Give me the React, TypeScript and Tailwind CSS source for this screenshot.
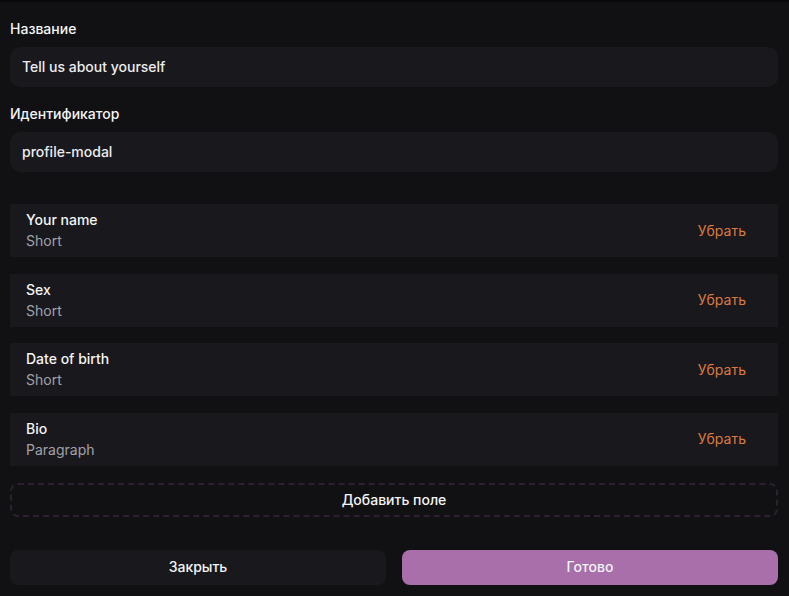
import React from "react";

const fields = [
  { name: "Your name", type: "Short" },
  { name: "Sex", type: "Short" },
  { name: "Date of birth", type: "Short" },
  { name: "Bio", type: "Paragraph" },
];

export default function App() {
  return (
    <div
      className="w-full h-[596px] bg-[#111113] border-t-2 border-[#08080a] text-[#f4f4f5] text-sm overflow-hidden"
      style={{ fontFamily: "Inter, 'Noto Sans', sans-serif" }}
    >
      <div className="flex flex-col pl-[10px] pr-[11px] pt-[17px]">
        <label className="font-medium leading-5">Название</label>
        <div className="mt-2 h-10 rounded-[10px] bg-[#19191d] flex items-center px-3 font-medium text-[#ececef]">
          Tell us about yourself
        </div>
        <label className="mt-[17px] font-medium leading-5">Идентификатор</label>
        <div className="mt-2 h-10 rounded-[10px] bg-[#19191d] flex items-center px-3 font-medium text-[#ececef]">
          profile-modal
        </div>

        <div className="mt-8 flex flex-col gap-[16.67px]">
          {fields.map((f) => (
            <div key={f.name} className="h-[53px] bg-[#19191d] flex items-center justify-between pl-4 pr-8">
              <div className="flex flex-col leading-[21px] -mt-[1px]">
                <span className="font-medium text-[#f4f4f5]">{f.name}</span>
                <span className="text-[#a1a1aa]">{f.type}</span>
              </div>
              <span className="text-[#d97a42]">Убрать</span>
            </div>
          ))}
        </div>

        <div className="mt-[16.67px] h-[34px] rounded-lg border-2 border-dashed border-[#2c2032] flex items-center justify-center font-medium text-[#f4f4f5]">
          Добавить поле
        </div>

        <div className="mt-[33px] grid grid-cols-2 gap-4">
          <div className="h-[35px] rounded-lg bg-[#19191d] flex items-center justify-center font-medium">
            Закрыть
          </div>
          <div className="h-[35px] rounded-lg bg-[#a86fab] flex items-center justify-center font-medium">
            Готово
          </div>
        </div>
      </div>
    </div>
  );
}
